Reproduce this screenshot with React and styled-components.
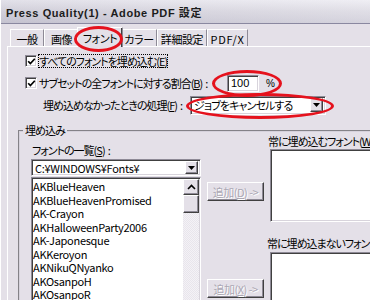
import React from "react";
import styled, { createGlobalStyle, css } from "styled-components";

const FONT = `"Noto Sans CJK JP", "Liberation Sans", sans-serif`;
const BG = "#e4e0e8";

const Global = createGlobalStyle`
  html, body { margin: 0; padding: 0; overflow: hidden; background: ${BG}; }
  * { box-sizing: border-box; }
`;

const raised = css`
  background: ${BG};
  border: 1px solid;
  border-color: #ffffff #404040 #404040 #ffffff;
  box-shadow: inset -1px -1px #8e8a96;
`;

const sunken = css`
  background: #ffffff;
  border: 1px solid;
  border-color: #8e8a96 #ffffff #ffffff #8e8a96;
  box-shadow: inset 1px 1px #404040, inset -1px -1px #d8d4dc;
`;

const Window = styled.div`
  width: 520px;
  height: 300px;
  overflow: hidden;
  background: ${BG};
  border-left: 1px solid #ffffff;
  display: flex;
  flex-direction: column;
  font-family: ${FONT};
  font-size: 11px;
  letter-spacing: -1px;
  font-feature-settings: "palt";
  color: #000;
`;

const TitleBar = styled.div`
  height: 24px;
  flex: none;
  display: flex;
  align-items: center;
  padding-left: 5px;
  background: linear-gradient(to right, rgba(120, 116, 140, 0.12), rgba(255, 255, 255, 0.25)),
    linear-gradient(to bottom, #f1f0f6 0%, #dddbe4 50%, #cfcdd9 100%);
  border-bottom: 1px solid #8a88a0;
`;

const Title = styled.span`
  font-family: "Liberation Sans", "Noto Sans CJK JP", sans-serif;
  font-weight: bold;
  font-size: 11px;
  letter-spacing: 0.6px;
  color: #1c1c1c;
  font-feature-settings: normal;
`;

const Body = styled.div`
  flex: 1;
  display: flex;
  flex-direction: column;
  padding: 5px 0 0 6px;
  min-height: 0;
`;

const Tabs = styled.div`
  display: flex;
  align-items: flex-end;
  height: 17px;
  padding-left: 3px;
  position: relative;
  z-index: 2;
`;

const Tab = styled.div`
  position: relative;
  flex: none;
  width: ${(p) => p.$w}px;
  height: ${(p) => (p.$active ? 20 : 17)}px;
  margin-bottom: ${(p) => (p.$active ? -1 : 0)}px;
  margin-left: ${(p) => (p.$active ? -2 : 0)}px;
  margin-right: ${(p) => (p.$active ? -2 : 0)}px;
  display: flex;
  align-items: center;
  justify-content: center;
  padding-top: ${(p) => (p.$active ? 0 : 1)}px;
  letter-spacing: ${(p) => (p.$latin ? "0.7px" : "-0.4px")};
  background: ${BG};
  border-top: 1px solid #ffffff;
  border-left: 1px solid #ffffff;
  border-right: 1px solid #8e8a96;
  box-shadow: ${(p) => (p.$active ? "inset -1px 0 #404040" : "none")};
  z-index: ${(p) => (p.$active ? 2 : 1)};
`;

const Ring = styled.span`
  position: absolute;
  pointer-events: none;
  top: ${(p) => p.$t}px;
  bottom: ${(p) => p.$b}px;
  left: ${(p) => p.$l}px;
  right: ${(p) => p.$r}px;
  border: 3px solid #e5121d;
  border-radius: 50%;
  z-index: 5;
`;

const Panel = styled.div`
  flex: 1;
  display: flex;
  flex-direction: column;
  border-top: 1px solid #ffffff;
  border-left: 1px solid #ffffff;
  min-height: 0;
`;

const Row = styled.div`
  display: flex;
  align-items: center;
  height: ${(p) => p.$h}px;
  margin-top: ${(p) => p.$mt}px;
  padding-left: ${(p) => p.$pl}px;
  white-space: nowrap;
`;

const CheckBox = styled.span`
  ${sunken};
  flex: none;
  width: 12px;
  height: 12px;
  display: inline-flex;
  align-items: center;
  justify-content: center;
  margin-right: 1px;
`;

const CheckLabel = styled.span`
  flex: none;
  width: ${(p) => (p.$w ? `${p.$w}px` : "auto")};
  padding: 0 1px;
  outline: ${(p) => (p.$focus ? "1px dotted #000" : "none")};
  outline-offset: -1px;
  line-height: 14px;
`;

const Key = styled.span`
  text-decoration: underline;
`;

const Colon = styled.span`
  margin-left: 3px;
`;

const Marked = styled.span`
  position: relative;
  display: inline-flex;
  align-items: center;
`;

const NumField = styled.span`
  ${sunken};
  width: 32px;
  height: 17px;
  display: inline-flex;
  align-items: center;
  padding-left: 3px;
  font-family: "Liberation Sans", sans-serif;
  letter-spacing: 0;
  font-size: 11px;
`;

const Percent = styled.span`
  margin-left: 7px;
  font-family: "Liberation Sans", sans-serif;
  letter-spacing: 0;
  font-size: 10px;
`;

const Select = styled.span`
  ${sunken};
  width: ${(p) => p.$w}px;
  height: ${(p) => p.$h}px;
  margin-top: ${(p) => p.$mt || 0}px;
  display: flex;
  align-items: center;
  padding: 0 2px 0 3px;
`;

const SelectText = styled.span`
  flex: 1;
  overflow: hidden;
  white-space: nowrap;
  letter-spacing: ${(p) => (p.$latin ? "-0.3px" : "-0.9px")};
`;

const ArrowBtn = styled.span`
  ${raised};
  flex: none;
  width: ${(p) => p.$w || 14}px;
  height: ${(p) => p.$h || 14}px;
  display: flex;
  align-items: center;
  justify-content: center;
`;

const Group = styled.fieldset`
  margin: 9px 0 0 10px;
  padding: 0 0 0 11px;
  border: 2px groove #d6d2dc;
  border-right: none;
  border-bottom: none;
  min-width: 0;
  flex: 1;
  min-height: 0;
`;

const Legend = styled.legend`
  padding: 0 2px;
  margin-left: -8px;
  line-height: 13px;
`;

const GroupGrid = styled.div`
  display: grid;
  grid-template-columns: 170px 57px 1fr;
  column-gap: 6px;
  height: 100%;
`;

const Column = styled.div`
  display: flex;
  flex-direction: column;
  min-width: 0;
`;

const Label = styled.div`
  line-height: 12px;
  margin-top: ${(p) => p.$mt}px;
  margin-left: ${(p) => p.$ml || 0}px;
  white-space: nowrap;
`;

const ListBox = styled.div`
  ${sunken};
  margin-top: ${(p) => p.$mt || 0}px;
  height: ${(p) => (p.$h ? `${p.$h}px` : "auto")};
  flex: ${(p) => (p.$h ? "none" : 1)};
  display: flex;
  padding: 2px 1px 1px 1px;
  min-height: 0;
`;

const Items = styled.div`
  flex: 1;
  overflow: hidden;
  letter-spacing: -0.3px;
`;

const Item = styled.div`
  height: 13.5px;
  line-height: 13.5px;
  white-space: nowrap;
`;

const ScrollBar = styled.div`
  width: 16px;
  flex: none;
  margin-top: -1px;
  display: flex;
  flex-direction: column;
  background: repeating-conic-gradient(#f4f2f6 0 25%, #e8e5ec 0 50%) 0 0 / 2px 2px;
`;

const Thumb = styled.div`
  ${raised};
  height: 18px;
  flex: none;
`;

const AddButton = styled.div`
  ${raised};
  height: 19px;
  margin-top: ${(p) => p.$mt}px;
  display: flex;
  align-items: center;
  justify-content: center;
  color: #aba7b3;
  text-shadow: 1px 1px #ffffff;
  letter-spacing: -0.5px;
  white-space: nowrap;
`;

const DownArrow = () => (
  <svg width="7" height="4" viewBox="0 0 7 4">
    <polygon points="0,0 7,0 3.5,4" fill="#000" />
  </svg>
);

const UpChevron = () => (
  <svg width="9" height="6" viewBox="0 0 9 6">
    <polyline points="1,5 4.5,1.5 8,5" fill="none" stroke="#000" strokeWidth="1.6" />
  </svg>
);

const Check = () => (
  <svg width="9" height="9" viewBox="0 0 9 9">
    <polyline points="1.2,4.2 3.4,6.6 7.8,1.8" fill="none" stroke="#000" strokeWidth="1.7" />
  </svg>
);

const fonts = [
  "AKBlueHeaven",
  "AKBlueHeavenPromised",
  "AK-Crayon",
  "AKHalloweenParty2006",
  "AK-Japonesque",
  "AKKeroyon",
  "AKNikuQNyanko",
  "AKOsanpoH",
  "AKOsanpoR",
  "AKPixel",
];

const tabs = [
  { label: "一般", w: 34 },
  { label: "画像", w: 35 },
  { label: "フォント", w: 46, active: true },
  { label: "カラー", w: 36 },
  { label: "詳細設定", w: 50 },
  { label: "PDF/X", w: 41, latin: true },
];

export default function App() {
  return (
    <>
      <Global />
      <Window>
        <TitleBar>
          <Title>Press Quality(1) - Adobe PDF 設定</Title>
        </TitleBar>
        <Body>
          <Tabs>
            {tabs.map((t) => (
              <Tab key={t.label} $w={t.w} $active={t.active} $latin={t.latin}>
                {t.label}
                {t.active && <Ring $t={-2} $b={-5} $l={-4} $r={-1} />}
              </Tab>
            ))}
          </Tabs>
          <Panel>
            <Row $h={16} $mt={6} $pl={17}>
              <CheckBox>
                <Check />
              </CheckBox>
              <CheckLabel $focus>
                すべてのフォントを埋め込む(<Key>E</Key>)
              </CheckLabel>
            </Row>
            <Row $h={18} $mt={5} $pl={17}>
              <CheckBox>
                <Check />
              </CheckBox>
              <CheckLabel $w={189}>
                サブセットの全フォントに対する割合(<Key>B</Key>)<Colon>:</Colon>
              </CheckLabel>
              <Marked>
                <NumField>100</NumField>
                <Percent>%</Percent>
                <Ring $t={-5} $b={-5} $l={-15} $r={-7} />
              </Marked>
            </Row>
            <Row $h={20} $mt={3} $pl={34}>
              <CheckLabel $w={148}>
                埋め込めなかったときの処理(<Key>F</Key>)<Colon>:</Colon>
              </CheckLabel>
              <Marked>
                <Select $w={136} $h={19}>
                  <SelectText>ジョブをキャンセルする</SelectText>
                  <ArrowBtn $w={13} $h={14}>
                    <DownArrow />
                  </ArrowBtn>
                </Select>
                <Ring $t={-3} $b={-4} $l={-4} $r={-8} />
              </Marked>
            </Row>
            <Group>
              <Legend>埋め込み</Legend>
              <GroupGrid>
                <Column>
                  <Label $mt={7} $ml={1}>
                    フォントの一覧(<Key>S</Key>)<Colon>:</Colon>
                  </Label>
                  <Select $w={170} $h={17} $mt={3}>
                    <SelectText $latin>C:¥WINDOWS¥Fonts¥</SelectText>
                    <ArrowBtn $w={13} $h={13}>
                      <DownArrow />
                    </ArrowBtn>
                  </Select>
                  <ListBox $mt={1}>
                    <Items>
                      {fonts.map((f) => (
                        <Item key={f}>{f}</Item>
                      ))}
                    </Items>
                    <ScrollBar>
                      <ArrowBtn $w={16} $h={16}>
                        <UpChevron />
                      </ArrowBtn>
                      <Thumb />
                    </ScrollBar>
                  </ListBox>
                </Column>
                <Column>
                  <AddButton $mt={45}>
                    追加(<Key>D</Key>) -&gt;
                  </AddButton>
                  <AddButton $mt={78}>
                    追加(<Key>X</Key>) -&gt;
                  </AddButton>
                </Column>
                <Column>
                  <Label $mt={-2} $ml={-2}>
                    常に埋め込むフォント(<Key>W</Key>)
                  </Label>
                  <ListBox $mt={2} $h={73} />
                  <Label $mt={15} $ml={-3}>
                    常に埋め込まないフォント
                  </Label>
                  <ListBox $mt={3} />
                </Column>
              </GroupGrid>
            </Group>
          </Panel>
        </Body>
      </Window>
    </>
  );
}
